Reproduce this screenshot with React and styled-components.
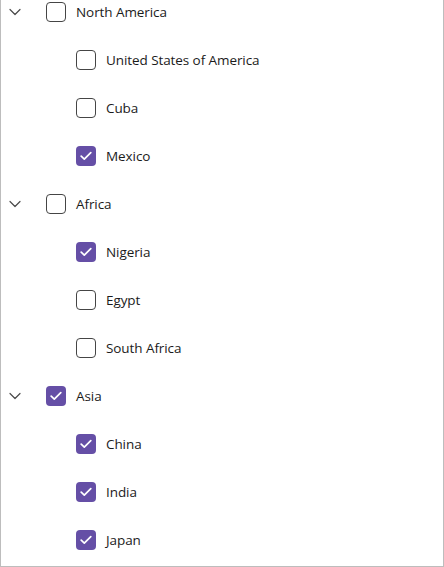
import React from 'react';
import styled, {createGlobalStyle} from 'styled-components';

const GlobalStyle = createGlobalStyle`
  html, body {
    margin: 0;
    padding: 0;
    background: #ffffff;
  }
  body {
    font-family: "Segoe UI", "Open Sans", "Liberation Sans", sans-serif;
  }
`;

const Frame = styled.div`
  box-sizing: border-box;
  width: 444px;
  height: 567px;
  overflow: hidden;
  border: 1px solid #bdbdbd;
  border-top: none;
  background: #ffffff;
`;

// the tree is scrolled a little, so the first row is cut at the top
const TreeList = styled.ul`
  list-style: none;
  margin: -12px 0 0 0;
  padding: 0;
`;

const Row = styled.li`
  display: flex;
  align-items: center;
  height: 48px;
  padding-left: ${props => props.depth * 30}px;
`;

const ChevronSlot = styled.span`
  display: flex;
  align-items: center;
  justify-content: center;
  width: 28px;
  height: 20px;
  margin-right: 17px;
  color: #4a4a4a;
`;

const Box = styled.span`
  box-sizing: border-box;
  display: flex;
  align-items: center;
  justify-content: center;
  width: 20px;
  height: 20px;
  border-radius: 4px;
  border: ${props => props.checked ? 'none' : '1.5px solid #454545'};
  background: ${props => props.checked ? '#654fa6' : '#ffffff'};
`;

const Label = styled.span`
  margin-left: 10px;
  margin-top: -1px;
  font-size: 13.5px;
  letter-spacing: -0.08px;
  color: #1b1b1b;
  white-space: nowrap;
`;

const tree = [
  {name: 'North America', checked: false, children: [
    {name: 'United States of America', checked: false},
    {name: 'Cuba', checked: false},
    {name: 'Mexico', checked: true},
  ]},
  {name: 'Africa', checked: false, children: [
    {name: 'Nigeria', checked: true},
    {name: 'Egypt', checked: false},
    {name: 'South Africa', checked: false},
  ]},
  {name: 'Asia', checked: true, children: [
    {name: 'China', checked: true},
    {name: 'India', checked: true},
    {name: 'Japan', checked: true},
  ]},
];

const Chevron = () => (
  <svg width="12" height="8" viewBox="0 0 12 8" fill="none">
    <path d="M1 1.5L6 6.5L11 1.5" stroke="currentColor" strokeWidth="1.2" strokeLinecap="round" strokeLinejoin="round" />
  </svg>
);

const Check = () => (
  <svg width="12" height="10" viewBox="0 0 12 10" fill="none">
    <path d="M1.2 5.2L4.3 8.2L10.8 1.6" stroke="#ffffff" strokeWidth="1.7" strokeLinecap="round" strokeLinejoin="round" />
  </svg>
);

const TreeRow = ({item, depth}) => (
  <Row depth={depth}>
    <ChevronSlot>{item.children ? <Chevron /> : null}</ChevronSlot>
    <Box checked={item.checked}>{item.checked ? <Check /> : null}</Box>
    <Label>{item.name}</Label>
  </Row>
);

export default function App() {
  return (
    <>
      <GlobalStyle />
      <Frame>
        <TreeList>
          {tree.map(group => (
            <React.Fragment key={group.name}>
              <TreeRow item={group} depth={0} />
              {group.children.map(child => (
                <TreeRow key={child.name} item={child} depth={1} />
              ))}
            </React.Fragment>
          ))}
        </TreeList>
      </Frame>
    </>
  );
}
